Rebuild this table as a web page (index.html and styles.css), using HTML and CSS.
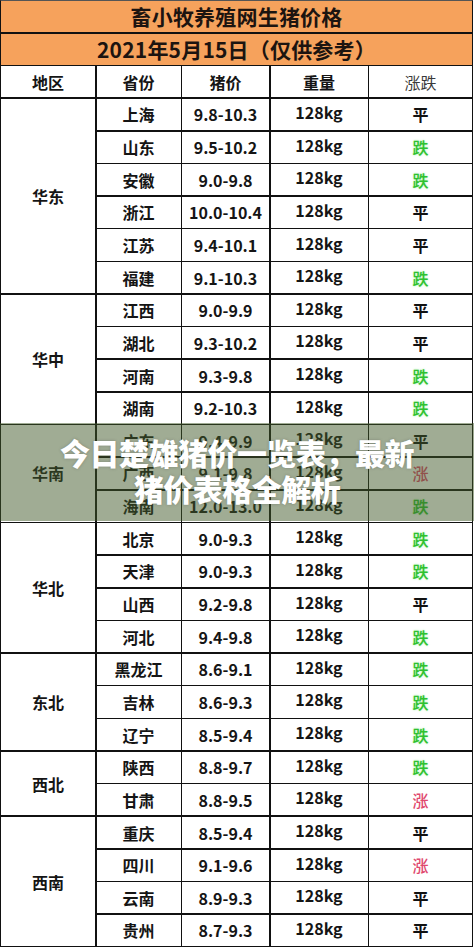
FILE: index.html
```html
<!DOCTYPE html>
<html lang="zh-CN">
<head>
<meta charset="utf-8">
<title>今日楚雄猪价一览表</title>
<link rel="stylesheet" href="styles.css">
</head>
<body>
<div class="page">
  <div class="sheet">
    <div class="cell title span5">畜小牧养殖网生猪价格</div>
    <div class="cell title span5">2021年5月15日（仅供参考）</div>
    <div class="cell head">地区</div>
    <div class="cell head">省份</div>
    <div class="cell head">猪价</div>
    <div class="cell head">重量</div>
    <div class="cell head light">涨跌</div>

    <div class="cell region rows6">华东</div>
    <div class="cell prov">上海</div><div class="cell price">9.8-10.3</div><div class="cell kg">128kg</div><div class="cell flat">平</div>
    <div class="cell prov">山东</div><div class="cell price">9.5-10.2</div><div class="cell kg">128kg</div><div class="cell down">跌</div>
    <div class="cell prov">安徽</div><div class="cell price">9.0-9.8</div><div class="cell kg">128kg</div><div class="cell down">跌</div>
    <div class="cell prov">浙江</div><div class="cell price">10.0-10.4</div><div class="cell kg">128kg</div><div class="cell flat">平</div>
    <div class="cell prov">江苏</div><div class="cell price">9.4-10.1</div><div class="cell kg">128kg</div><div class="cell flat">平</div>
    <div class="cell prov">福建</div><div class="cell price">9.1-10.3</div><div class="cell kg">128kg</div><div class="cell down">跌</div>

    <div class="cell region rows4">华中</div>
    <div class="cell prov">江西</div><div class="cell price">9.0-9.9</div><div class="cell kg">128kg</div><div class="cell flat">平</div>
    <div class="cell prov">湖北</div><div class="cell price">9.3-10.2</div><div class="cell kg">128kg</div><div class="cell flat">平</div>
    <div class="cell prov">河南</div><div class="cell price">9.3-9.8</div><div class="cell kg">128kg</div><div class="cell down">跌</div>
    <div class="cell prov">湖南</div><div class="cell price">9.2-10.3</div><div class="cell kg">128kg</div><div class="cell down">跌</div>

    <div class="cell region rows3">华南</div>
    <div class="cell prov">广东</div><div class="cell price">9.4-9.9</div><div class="cell kg">128kg</div><div class="cell flat">平</div>
    <div class="cell prov">广西</div><div class="cell price">9.1-9.8</div><div class="cell kg">128kg</div><div class="cell up">涨</div>
    <div class="cell prov">海南</div><div class="cell price">12.0-13.0</div><div class="cell kg">128kg</div><div class="cell down">跌</div>

    <div class="cell region rows4">华北</div>
    <div class="cell prov">北京</div><div class="cell price">9.0-9.3</div><div class="cell kg">128kg</div><div class="cell down">跌</div>
    <div class="cell prov">天津</div><div class="cell price">9.0-9.3</div><div class="cell kg">128kg</div><div class="cell down">跌</div>
    <div class="cell prov">山西</div><div class="cell price">9.2-9.8</div><div class="cell kg">128kg</div><div class="cell flat">平</div>
    <div class="cell prov">河北</div><div class="cell price">9.4-9.8</div><div class="cell kg">128kg</div><div class="cell down">跌</div>

    <div class="cell region rows3">东北</div>
    <div class="cell prov">黑龙江</div><div class="cell price">8.6-9.1</div><div class="cell kg">128kg</div><div class="cell down">跌</div>
    <div class="cell prov">吉林</div><div class="cell price">8.6-9.3</div><div class="cell kg">128kg</div><div class="cell down">跌</div>
    <div class="cell prov">辽宁</div><div class="cell price">8.5-9.4</div><div class="cell kg">128kg</div><div class="cell down">跌</div>

    <div class="cell region rows2">西北</div>
    <div class="cell prov">陕西</div><div class="cell price">8.8-9.7</div><div class="cell kg">128kg</div><div class="cell down">跌</div>
    <div class="cell prov">甘肃</div><div class="cell price">8.8-9.5</div><div class="cell kg">128kg</div><div class="cell up">涨</div>

    <div class="cell region rows4">西南</div>
    <div class="cell prov">重庆</div><div class="cell price">8.5-9.4</div><div class="cell kg">128kg</div><div class="cell flat">平</div>
    <div class="cell prov">四川</div><div class="cell price">9.1-9.6</div><div class="cell kg">128kg</div><div class="cell up">涨</div>
    <div class="cell prov">云南</div><div class="cell price">8.9-9.3</div><div class="cell kg">128kg</div><div class="cell flat">平</div>
    <div class="cell prov">贵州</div><div class="cell price">8.7-9.3</div><div class="cell kg">128kg</div><div class="cell flat">平</div>
  </div>
  <div class="banner">
    <div class="banner-line">今日楚雄猪价一览表，最新</div>
    <div class="banner-line">猪价表格全解析</div>
  </div>
</div>
</body>
</html>
```

FILE: styles.css
```css
html, body {
  margin: 0;
  padding: 0;
  background: #ffffff;
}

.page {
  position: relative;
  width: 474px;
  height: 947px;
  overflow: hidden;
  font-family: "Noto Sans CJK SC", "Noto Sans", sans-serif;
}

.sheet {
  box-sizing: border-box;
  width: 473px;
  height: 947px;
  display: grid;
  grid-template-columns: 94px 84px 87px 97px 1fr;
  grid-template-rows: repeat(29, 1fr);
  column-gap: 1.5px;
  row-gap: 1.6px;
  background: #111111;
  border-left: 1.5px solid #111111;
  border-right: 1.5px solid #111111;
  border-top: 1px solid #555555;
  border-bottom: 1.5px solid #111111;
}

.cell {
  background: #ffffff;
  display: flex;
  align-items: center;
  justify-content: center;
  font-size: 16px;
  font-weight: 700;
  color: #151515;
  line-height: 1;
}

.span5 {
  grid-column: 1 / -1;
}

.title {
  background: #f6a25c;
  font-size: 21px;
  color: #1c1410;
  letter-spacing: 0.2px;
}

.head {
  font-size: 16px;
}

.head.light {
  font-weight: 400;
  color: #3a3a3a;
}

.region {
  grid-column: 1;
}

.rows6 { grid-row: span 6; }
.rows4 { grid-row: span 4; }
.rows3 { grid-row: span 3; }
.rows2 { grid-row: span 2; }

.prov {
  font-size: 16px;
}

.price {
  font-size: 16px;
}

.kg {
  font-size: 16px;
  padding-bottom: 5px;
  box-sizing: border-box;
}

.flat {
  color: #111111;
}

.down {
  color: #2fc12f;
  font-weight: 500;
  text-shadow: 0 0 2px rgba(90, 220, 90, 0.6);
}

.up {
  color: #e0486e;
  font-weight: 500;
}

.banner {
  position: absolute;
  left: 0;
  right: 0;
  top: 423px;
  height: 98px;
  background: rgba(65, 89, 41, 0.5);
  display: flex;
  flex-direction: column;
  align-items: center;
  justify-content: center;
  padding-bottom: 4px;
  box-sizing: border-box;
}

.banner-line {
  color: #ffffff;
  font-size: 30px;
  font-weight: 900;
  line-height: 36px;
  letter-spacing: -0.5px;
  text-shadow: 0 0 3px rgba(60, 60, 60, 0.35);
}
```
